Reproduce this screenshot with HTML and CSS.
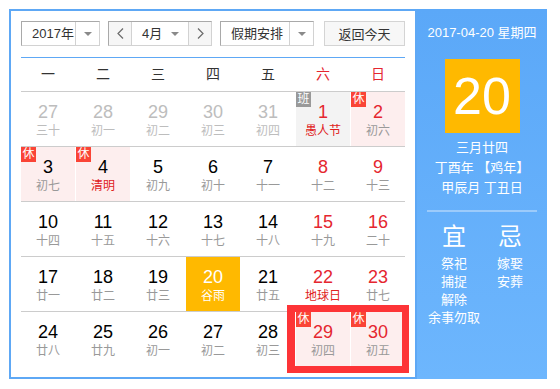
FILE: index.html
```html
<!DOCTYPE html>
<html lang="zh-CN">
<head>
  <meta charset="utf-8">
  <title>万年历</title>
  <link rel="stylesheet" href="styles.css">
</head>
<body>
  <div class="calendar">
    <div class="main">
      <div class="toolbar">
        <div class="select year">
          <span class="val">2017年</span>
          <span class="drop"><i class="tri"></i></span>
        </div>
        <div class="select month">
          <span class="step"><svg width="7" height="11" viewBox="0 0 7 11"><polyline points="6,0.5 1,5.5 6,10.5" fill="none" stroke="#6a6a6a" stroke-width="1.2"/></svg></span>
          <span class="val mid">4月<i class="tri"></i></span>
          <span class="step"><svg width="7" height="11" viewBox="0 0 7 11"><polyline points="1,0.5 6,5.5 1,10.5" fill="none" stroke="#6a6a6a" stroke-width="1.2"/></svg></span>
        </div>
        <div class="select holiday">
          <span class="val">假期安排</span>
          <span class="drop"><i class="tri"></i></span>
        </div>
        <button class="today-btn">返回今天</button>
      </div>

      <div class="week-head">
        <span>一</span><span>二</span><span>三</span><span>四</span><span>五</span>
        <span class="red">六</span><span class="red">日</span>
      </div>

      <div class="grid">
        <div class="row">
          <div class="day other"><b>27</b><span>三十</span></div>
          <div class="day other"><b>28</b><span>初一</span></div>
          <div class="day other"><b>29</b><span>初二</span></div>
          <div class="day other"><b>30</b><span>初三</span></div>
          <div class="day other"><b>31</b><span>初四</span></div>
          <div class="day work wkend fest"><i class="badge">班</i><b>1</b><span>愚人节</span></div>
          <div class="day rest wkend"><i class="badge">休</i><b>2</b><span>初六</span></div>
        </div>
        <div class="row">
          <div class="day rest"><i class="badge">休</i><b>3</b><span>初七</span></div>
          <div class="day rest fest"><i class="badge">休</i><b>4</b><span>清明</span></div>
          <div class="day"><b>5</b><span>初九</span></div>
          <div class="day"><b>6</b><span>初十</span></div>
          <div class="day"><b>7</b><span>十一</span></div>
          <div class="day wkend"><b>8</b><span>十二</span></div>
          <div class="day wkend"><b>9</b><span>十三</span></div>
        </div>
        <div class="row">
          <div class="day"><b>10</b><span>十四</span></div>
          <div class="day"><b>11</b><span>十五</span></div>
          <div class="day"><b>12</b><span>十六</span></div>
          <div class="day"><b>13</b><span>十七</span></div>
          <div class="day"><b>14</b><span>十八</span></div>
          <div class="day wkend"><b>15</b><span>十九</span></div>
          <div class="day wkend"><b>16</b><span>二十</span></div>
        </div>
        <div class="row">
          <div class="day"><b>17</b><span>廿一</span></div>
          <div class="day"><b>18</b><span>廿二</span></div>
          <div class="day"><b>19</b><span>廿三</span></div>
          <div class="day today"><b>20</b><span>谷雨</span></div>
          <div class="day"><b>21</b><span>廿五</span></div>
          <div class="day wkend fest"><b>22</b><span>地球日</span></div>
          <div class="day wkend"><b>23</b><span>廿七</span></div>
        </div>
        <div class="row">
          <div class="day"><b>24</b><span>廿八</span></div>
          <div class="day"><b>25</b><span>廿九</span></div>
          <div class="day"><b>26</b><span>初一</span></div>
          <div class="day"><b>27</b><span>初二</span></div>
          <div class="day"><b>28</b><span>初三</span></div>
          <div class="day rest wkend"><i class="badge">休</i><b>29</b><span>初四</span></div>
          <div class="day rest wkend"><i class="badge">休</i><b>30</b><span>初五</span></div>
        </div>
        <!-- highlight around the weekend off days -->
        <div class="mark"></div>
      </div>
    </div>

    <div class="side">
      <div class="date">2017-04-20 星期四</div>
      <div class="big-day">20</div>
      <div class="lunar-info">
        <p>三月廿四</p>
        <p>丁酉年 【鸡年】</p>
        <p>甲辰月 丁丑日</p>
      </div>
      <div class="sep"></div>
      <div class="yiji">
        <div class="col">
          <h3>宜</h3>
          <p>祭祀</p><p>捕捉</p><p>解除</p><p>余事勿取</p>
        </div>
        <div class="col">
          <h3>忌</h3>
          <p>嫁娶</p><p>安葬</p>
        </div>
      </div>
    </div>
  </div>
</body>
</html>
```

FILE: styles.css
```css
body {
  margin: 0;
  padding: 9px;
  font-family: "Liberation Sans", "Noto Sans CJK SC", sans-serif;
  color: #333;
}
.calendar {
  display: flex;
  width: 538px;
}
.main {
  width: 384px;
  padding: 10px 10px 11px;
  border: 2px solid #5ea8f5;
}
.toolbar {
  display: flex;
  height: 25px;
  margin-bottom: 11px;
  font-size: 13px;
}
.select {
  display: flex;
  box-sizing: border-box;
  height: 25px;
  border: 1px solid;
  border-color: #a9a9a9 #d2d2d2 #d2d2d2 #a9a9a9;
  margin-right: 8px;
  line-height: 23px;
}
.select .val {
  flex: 1;
  padding-left: 10px;
}
.drop {
  width: 23px;
  border-left: 1px solid #d2d2d2;
  display: flex;
  align-items: center;
  justify-content: center;
}
.tri {
  width: 0;
  height: 0;
  border-left: 4px solid transparent;
  border-right: 4px solid transparent;
  border-top: 4px solid #8a8a8a;
}
.year {
  width: 79px;
}
.month {
  width: 104px;
}
.step {
  width: 22px;
  background-color: #f6f6f6;
  display: flex;
  align-items: center;
  justify-content: center;
}
.month .mid {
  display: flex;
  align-items: center;
  justify-content: space-between;
  padding: 0 9px 0 10px;
  border-left: 1px solid #d2d2d2;
  border-right: 1px solid #d2d2d2;
}
.holiday {
  width: 94px;
  margin-right: 10px;
}
.today-btn {
  width: 81px;
  height: 25px;
  padding: 0;
  background-color: #f7f7f7;
  border: 1px solid #d4d4d4;
  font-family: inherit;
  font-size: 13px;
  color: #333;
}
.week-head {
  display: grid;
  grid-template-columns: repeat(7, 54px);
  column-gap: 1px;
  height: 33px;
  line-height: 33px;
  border-top: 1px solid #5ea8f5;
  text-align: center;
  font-size: 14px;
}
.red {
  color: #e5262f;
}
.grid {
  position: relative;
}
.row {
  display: grid;
  grid-template-columns: repeat(7, 54px);
  column-gap: 1px;
  border-top: 1px solid #cccccc;
}
.day {
  position: relative;
  height: 54px;
  box-sizing: border-box;
  padding-top: 10px;
  text-align: center;
}
.day b {
  display: block;
  font-weight: normal;
  font-size: 18px;
  line-height: 20px;
  color: #000;
}
.day span {
  display: block;
  font-size: 12px;
  line-height: 18px;
  color: #999;
}
.day.other b,
.day.other span {
  color: #bdbdbd;
}
.day.wkend b {
  color: #e5262f;
}
.day.fest span {
  color: #e02020;
}
.day.rest {
  background-color: #fdeeee;
}
.day.work {
  background-color: #f3f3f3;
}
.day.today {
  background-color: #ffb900;
}
.day.today b,
.day.today span {
  color: #fff;
}
.badge {
  position: absolute;
  top: 0;
  left: 0;
  width: 15px;
  height: 15px;
  line-height: 15px;
  font-size: 12px;
  font-style: normal;
  color: #fff;
  background-color: #fa4436;
}
.work .badge {
  background-color: #999;
}
.mark {
  position: absolute;
  left: 266px;
  top: 214px;
  width: 122px;
  height: 68px;
  box-sizing: border-box;
  border: 7px solid #fd3437;
  border-left-width: 8px;
  pointer-events: none;
}
.side {
  width: 130px;
  padding-top: 15px;
  background: linear-gradient(#5ba8f8, #6db6fd);
  color: #fff;
  text-align: center;
  font-size: 13px;
}
.date {
  line-height: 18px;
}
.big-day {
  width: 75px;
  height: 74px;
  margin: 17px auto 0;
  background-color: #ffb900;
  font-size: 52px;
  line-height: 74px;
}
.lunar-info {
  margin-top: 5px;
}
.lunar-info p {
  margin: 0;
  line-height: 20px;
}
.sep {
  width: 110px;
  height: 2px;
  margin: 12px auto 0;
  background-color: #9ccbfb;
}
.yiji {
  display: flex;
  width: 112px;
  margin: 10px auto 0;
}
.col {
  width: 56px;
}
.col h3 {
  margin: 0 0 3px;
  font-size: 24px;
  font-weight: normal;
  line-height: 30px;
}
.col p {
  margin: 0;
  line-height: 18px;
}
```
